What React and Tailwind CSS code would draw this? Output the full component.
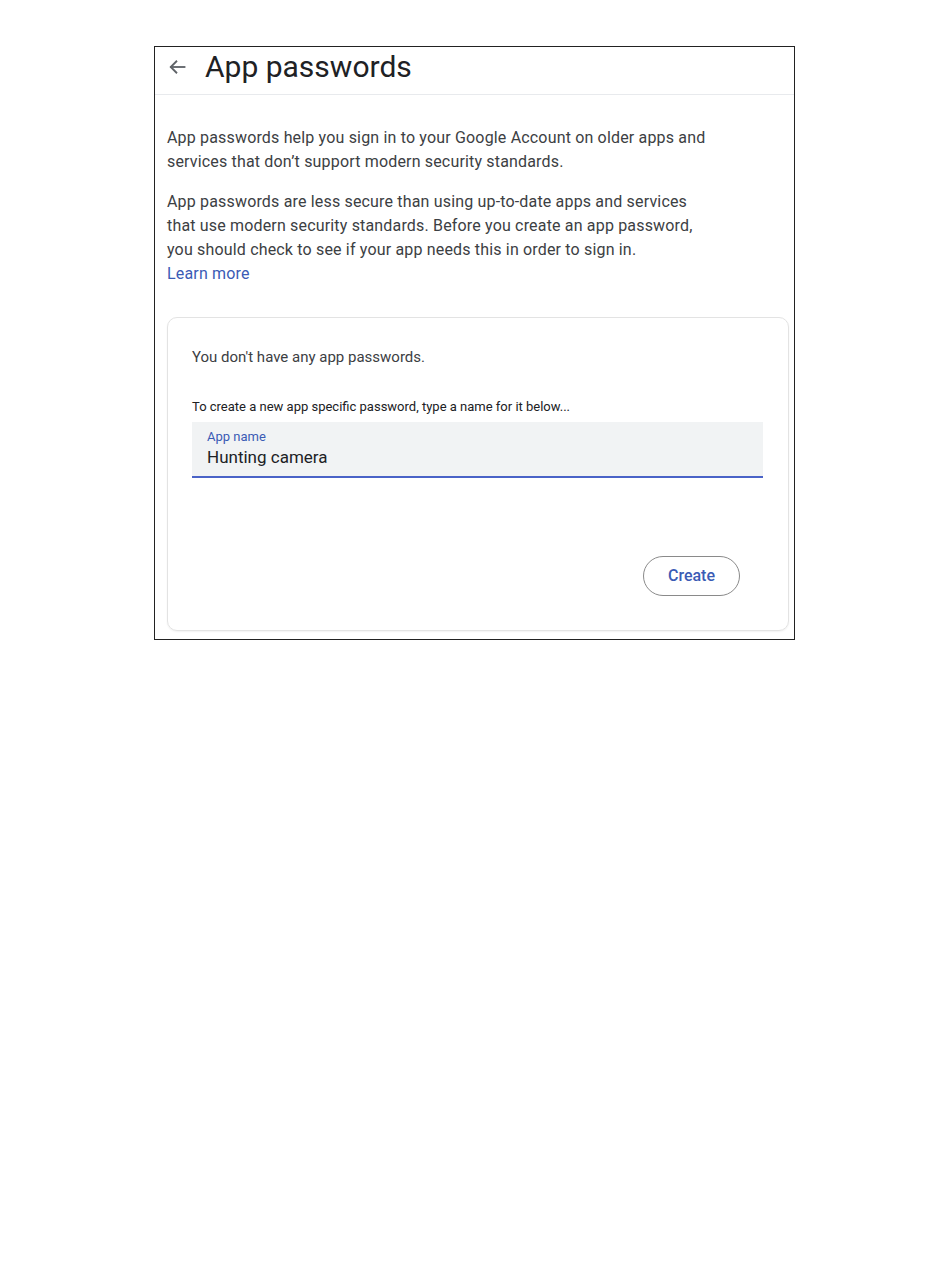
export default function App() {
  return (
    <div className="w-[950px] h-[1279px] bg-white" style={{ fontFamily: "Roboto, 'Liberation Sans', sans-serif" }}>
      <div className="pt-[46px] pl-[154px]">
        <div className="w-[641px] h-[594px] border border-[#222] flex flex-col">
          <div className="h-[48px] flex items-center border-b border-[#e8eaed] shrink-0 pb-[7px]">
            <div className="w-[50px] flex justify-start pl-[12px]">
              <svg width="20" height="20" viewBox="0 0 24 24" fill="none" stroke="#5f6368" strokeWidth="2.2" strokeLinecap="square">
                <path d="M21 12H5" />
                <path d="M12 4.5l-7.5 7.5 7.5 7.5" strokeLinecap="butt" />
              </svg>
            </div>
            <h1 className="text-[30px] text-[#202124] leading-none tracking-[0px]">App passwords</h1>
          </div>
          <div className="pl-[12px] pr-[5px] pt-[31px] text-[16px] leading-[24px] text-[#3c4043] tracking-[0.17px]">
            <p>App passwords help you sign in to your Google Account on older apps and<br />services that don’t support modern security standards.</p>
            <p className="mt-[16px]">App passwords are less secure than using up-to-date apps and services<br />that use modern security standards. Before you create an app password,<br />you should check to see if your app needs this in order to sign in.</p>
            <a className="text-[#3b5bb5] block">Learn more</a>
            <div className="mt-[31px] h-[314px] rounded-[10px] border border-[#e3e3e3] shadow-[0_1px_2px_rgba(0,0,0,0.06)] pl-[24px] pr-[25px] pt-[28px] flex flex-col tracking-normal">
              <div className="text-[15px] leading-[22px] text-[#3c4043]">You don't have any app passwords.</div>
              <div className="mt-[30px] text-[13px] leading-[18px] text-[#202124]">To create a new app specific password, type a name for it below...</div>
              <div className="mt-[6px] h-[56px] bg-[#f1f3f4] border-b-2 border-[#4a63c7] px-[15px] pt-[8px]">
                <div className="text-[13px] leading-[14px] text-[#3b5bb5]">App name</div>
                <div className="text-[17px] leading-[24px] text-[#202124] mt-[1px]">Hunting camera</div>
              </div>
              <div className="flex justify-end mt-[78px] pr-[23px]">
                <button className="w-[97px] h-[40px] rounded-full border border-[#8a8a8a] text-[#3b5bb5] text-[16px] font-medium">Create</button>
              </div>
            </div>
          </div>
        </div>
      </div>
    </div>
  );
}
